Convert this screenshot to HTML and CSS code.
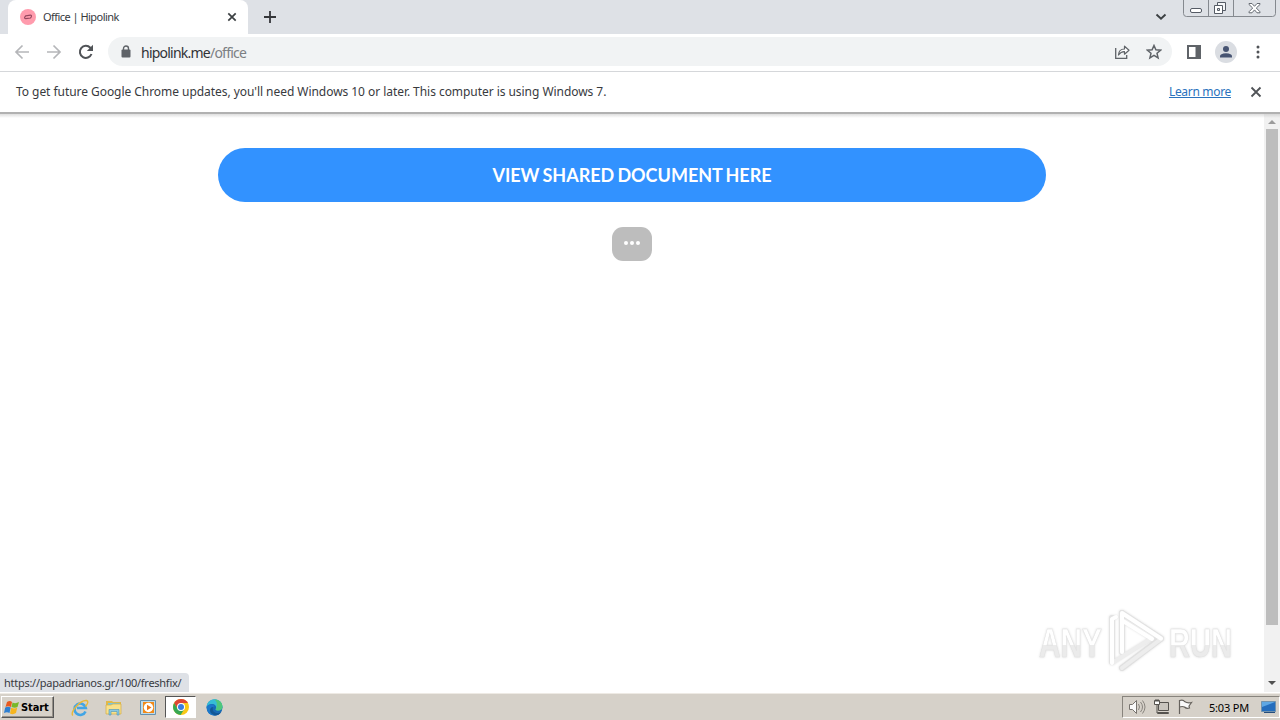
FILE: index.html
```html
<!DOCTYPE html>
<html lang="en">
<head>
<meta charset="utf-8">
<title>Office | Hipolink</title>
<link rel="stylesheet" href="styles.css">
</head>
<body>
<div class="desktop">
  <header class="tabstrip">
    <div class="tab">
      <svg class="favicon" width="16" height="16" viewBox="0 0 16 16"><circle cx="8" cy="8" r="8" fill="#ff9bad"/><path d="M5.700 6.800 10.500 6.200q1.300 0 .8 1.500l-.8 1.300-4.800.6Q4.300 9.600 4.700 8.200z" fill="none" stroke="#96485f" stroke-width="1.200"/></svg>
      <span class="tab-title">Office | Hipolink</span>
      <svg class="tab-close" width="10" height="10" viewBox="0 0 10 10"><path d="m1.300 1.300 7.400 7.400m0-7.400-7.400 7.400" stroke="#3c4043" stroke-width="1.700"/></svg>
    </div>
    <svg class="new-tab" width="12" height="12" viewBox="0 0 12 12"><path d="M6 0v12M0 6h12" stroke="#35363a" stroke-width="1.800"/></svg>
    <svg class="tab-search" width="12" height="8" viewBox="0 0 12 8"><path d="m1.500 1.500 4.500 4.300 4.500-4.300" fill="none" stroke="#3c4043" stroke-width="1.900"/></svg>
    <svg class="window-buttons" width="94" height="18" viewBox="0 0 94 18"><path d="M.5 0v13.500q0 3 3 3h86q3 0 3-3V0M25.500 0v16M50.500 0v16" fill="none" stroke="#85898f"/><rect x="7.500" y="8.500" width="11" height="4" rx="1.500" fill="#fff" stroke="#555b65"/><path d="M34.500 2.500h8v8h-8z" fill="#f5f6f8" stroke="#555b65"/><path d="M31.500 5.500h8v8h-8z" fill="#fff" stroke="#555b65"/><path d="M34.500 8.500h2v2h-2z" fill="#dee1e6" stroke="#555b65"/><path d="M66 3.500h3l2.500 2.800L74 3.500h3v1L73.300 8l3.700 3.800v1h-3l-2.500-2.900-2.500 2.900h-3v-1L69.700 8 66 4.500z" fill="#fff" stroke="#666b73"/></svg>
  </header>
  <nav class="toolbar">
    <svg class="back" width="16" height="16" viewBox="0 0 16 16"><path d="M15 8H2m6.500-6.500L2 8l6.500 6.500" fill="none" stroke="#b5b6b9" stroke-width="1.700"/></svg>
    <svg class="forward" width="16" height="16" viewBox="0 0 16 16"><path d="M1 8h13M7.500 1.500 14 8l-6.500 6.500" fill="none" stroke="#b5b6b9" stroke-width="1.700"/></svg>
    <svg class="reload" width="16" height="16" viewBox="0 0 16 16"><path d="M13.500 10A6 6 0 1 1 12.300 3.800L14 5.500" fill="none" stroke="#505357" stroke-width="2"/><path d="M15 .8V7H8.800z" fill="#505357"/></svg>
    <div class="omnibox">
      <svg class="lock" width="10" height="13" viewBox="0 0 10 13"><path d="M2.500 5V3.500a2.500 2.500 0 0 1 5 0V5" fill="none" stroke="#5f6368" stroke-width="1.400"/><rect x=".5" y="4.500" width="9" height="8" rx="1" fill="#5f6368"/></svg>
      <span class="url"><span class="host">hipolink.me</span>/office</span>
      <svg class="share" width="17" height="16" viewBox="0 0 17 16"><path d="M1.700 4v10.300h11V11" fill="none" stroke="#5f6368" stroke-width="1.300"/><path d="M4.500 11q.3-6 6-6V2.200l4.500 4-4.500 4V7.700Q7 7.500 4.500 11z" fill="#fff" stroke="#5f6368" stroke-width="1.200" stroke-linejoin="round"/></svg>
      <svg class="star" width="16" height="16" viewBox="0 0 16 16"><path d="m8 1.500 1.900 4.300 4.700.4L11 9.300l1.100 4.600L8 11.400l-4.100 2.500L5 9.300 1.400 6.200l4.700-.4z" fill="none" stroke="#5f6368" stroke-width="1.500"/></svg>
    </div>
    <svg class="side-panel" width="14" height="14" viewBox="0 0 14 14"><rect x="1" y="1" width="12" height="12" fill="#fff" stroke="#5f6368" stroke-width="2"/><path d="M8.500 1H13v12H8.500z" fill="#5f6368"/></svg>
    <svg class="avatar" width="22" height="22" viewBox="0 0 22 22"><circle cx="11" cy="11" r="11" fill="#dadde2"/><circle cx="11" cy="8" r="3" fill="#475472"/><path d="M5 16.500v-1.300q0-2.700 6-3 6 .3 6 3v1.300z" fill="#475472"/></svg>
    <svg class="menu" width="4" height="14" viewBox="0 0 4 14"><g fill="#505357"><circle cx="2" cy="2" r="1.500"/><circle cx="2" cy="7" r="1.500"/><circle cx="2" cy="12" r="1.500"/></g></svg>
  </nav>
  <div class="infobar">
    <span class="info-text">To get future Google Chrome updates, you'll need Windows 10 or later. This computer is using Windows 7.</span>
    <a class="learn">Learn more</a>
    <svg width="12" height="12" viewBox="0 0 12 12"><path d="m1.500 1.500 9 9m0-9-9 9" stroke="#505357" stroke-width="1.800"/></svg>
  </div>
  <main class="viewport">
    <div class="page">
      <a class="cta"><span>VIEW SHARED DOCUMENT HERE</span></a>
      <div class="more"><i></i><i></i><i></i></div>
    </div>
    <div class="scrollbar">
      <svg width="8" height="4" viewBox="0 0 8 4"><path d="m0 4 4-4 4 4z" fill="#9b9b9b"/></svg>
      <div class="thumb"></div>
      <svg class="down" width="8" height="4" viewBox="0 0 8 4"><path d="m0 0 4 4 4-4z" fill="#505050"/></svg>
    </div>
    <div class="status"><span>https://papadrianos.gr/100/freshfix/</span></div>
    <svg class="watermark" width="240" height="72" viewBox="0 0 240 72">
      <defs><linearGradient id="fade" x1="0" y1="0" x2="0" y2="1"><stop offset=".54" stop-color="#fff"/><stop offset=".54" stop-color="#ebebeb"/></linearGradient></defs>
      <g class="mark-letters" fill="url(#fade)"><text x="7" y="51" textLength="63" lengthAdjust="spacingAndGlyphs">ANY</text><text x="137" y="51" textLength="63" lengthAdjust="spacingAndGlyphs">RUN</text></g>
      <g fill="none" stroke-linejoin="round" stroke-linecap="round"><path d="m90 7 39 25.500L90 62" stroke="#e0e0e0" stroke-width="6"/><path d="M80 12v44M90 7v39m0-39 39 25.500" stroke="#e3e3e3" stroke-width="6"/><path d="M129 33 90 62M80 57l40-25-27-17" stroke="#ededed" stroke-width="4"/><path d="M80 57V13l4-2M90 46V7l39 25.500M91 15l29 18" stroke="#fff" stroke-width="4"/></g>
    </svg>
  </main>
  <footer class="taskbar">
    <div class="start">
      <svg width="16" height="15" viewBox="0 0 16 15"><path d="M3 2q3-2 5 0L7 7Q4 5.500 1.500 7z" fill="#e85a20"/><path d="M8.500 2.500q3 1.500 6.500-.5l-1.500 5Q11 8.500 7.500 7z" fill="#78b82a"/><path d="M1.200 7.500q3-1.500 5.500 0L5.500 13Q3 11.500 0 13z" fill="#2e7fd1"/><path d="M7.200 7.800q3 1.500 6 0L12 13q-3 2-6 .5z" fill="#f6b51e"/></svg>
      <span>Start</span>
    </div>
    <svg class="task-icon first-task" width="18" height="18" viewBox="0 0 18 18"><path d="M14.500 12.500A5.700 5.700 0 1 1 14.800 9H6" fill="none" stroke="#42a5e5" stroke-width="2.600"/><path d="M1.800 16.500C-1 13 9 1 15.500 1.500q3 1-1 6" fill="none" stroke="#e8b838" stroke-width="1.400"/></svg>
    <svg class="task-icon" width="18" height="18" viewBox="0 0 18 18"><path d="M1 4V2h6l1 1h8v11H1z" fill="#e2b948"/><path d="M3 4h12v6H3z" fill="#78c7df"/><path d="M1 6h5l2-1h8v10H1z" fill="#f8e18c" stroke="#d5ad43" stroke-width=".7"/><path d="M4 16v-5.500h10V16h-2v-3.500H6V16z" fill="#8ac9e2" stroke="#4c93b7" stroke-width=".6"/></svg>
    <svg class="task-icon" width="18" height="18" viewBox="0 0 18 18"><path d="M1.500 1.500h15v14h-15z" fill="#bedbea" stroke="#6590ae"/><path d="M4 3h11v11H4z" fill="#f28a19"/><circle cx="9.500" cy="8.500" r="4.700" fill="#fff"/><path d="m8 5.800 4.500 2.700L8 11.300z" fill="#ee7815"/></svg>
    <div class="active-task"><svg width="16" height="16" viewBox="0 0 16 16"><circle cx="8" cy="8" r="8" fill="#f9c816"/><path d="M1.100 4A8 8 0 0 1 15 4.100H8L4.700 10z" fill="#df4635"/><path d="M1.100 4a8 8 0 0 0 6.500 12l3.800-6-6.700 0z" fill="#37a853"/><circle cx="8" cy="8" r="4" fill="#fff"/><circle cx="8" cy="8" r="3" fill="#397de0"/></svg></div>
    <svg class="edge" width="17" height="17" viewBox="0 0 17 17"><circle cx="8.500" cy="8.500" r="8" fill="#1769b5"/><path d="M.6 7.500C2-2 15-2 16.400 7q.3 4.500-4.500 4.500-3.500 0-1.700-2.500Q10 4.500 5 5 2 5.500.6 7.500z" fill="#36bdd5"/><path d="M8.500.5q7 0 8 6.500.2 4.500-4.600 4.500-3.500 0-1.500-2.700Q12 3 8.500.5z" fill="#4fc77b"/><path d="M.6 7.500Q5 3.500 9 7q-3 1-2.200 4 1.700 3.500 7.700 2.500-2.500 3.500-7 3Q.5 15 .6 7.500z" fill="#1b78ca"/><path d="M7 8q-1.500 5 4 6 2 .3 4.300-1Q13 16.500 9 16.500 3 14.500 4.200 10 5 8.200 7 8z" fill="#125795"/></svg>
    <div class="tray">
      <svg class="speaker" width="18" height="16" viewBox="0 0 18 16"><path d="M1.500 5.500h3l4-4v13l-4-4h-3z" fill="#fafafa" stroke="#77736e"/><path d="M10.500 5q2 3 0 6m2-8q4 5 0 10m2-11.500q5 6.500 0 13" fill="none" stroke="#88847e"/></svg>
      <svg class="network" width="17" height="16" viewBox="0 0 17 16"><path d="M5.500 3.500h10v8h-10z" fill="#c9c5be" stroke="#55524e"/><path d="M4.500 13.500h11v1h-11z" fill="#fff" stroke="#55524e"/><path d="M1.500 1.500h5v4h-5zM4 6v8M3 0v3m2-3v3" fill="#fff" stroke="#55524e"/></svg>
      <svg class="flag" width="17" height="16" viewBox="0 0 17 16"><path d="M2.500 15V1.500q4-1 5 1 3 2 7 1L12 7l.5 2q-3 1-5-1-2-1-5 0" fill="#fafafa" stroke="#66625d" stroke-width="1.200"/></svg>
      <span>5:03 PM</span>
      <svg class="show-desktop" width="16" height="14" viewBox="0 0 16 14"><path d="M.5 1.500h14v10H.5z" fill="#246dbd" stroke="#7293ad"/><path d="M1 2h13L1 7z" fill="#5ea7e4"/><path d="M3 12h11v1H3z" fill="#254d7c"/></svg>
    </div>
  </footer>
</div>
</body>
</html>
```
FILE: styles.css
```css
* { box-sizing: border-box; }
body { margin: 0; font-family: "Noto Sans", sans-serif; color: #383a3e; overflow: hidden; }
svg { display: block; flex: none; }
span, a { white-space: nowrap; }
.desktop { width: 1280px; height: 720px; display: flex; flex-direction: column; background: #fff; }
.tabstrip { height: 34px; flex: none; display: flex; background: #dee1e6; padding-left: 8px; }
.tab { width: 240px; height: 34px; display: flex; align-items: center; padding-left: 12px; border-radius: 8px 8px 0 0; background: #fff; }
.tab-title { margin: -2px 0 0 7px; width: 184px; font-size: 11px; letter-spacing: -.54px; }
.new-tab { margin: 11px 0 0 16px; }
.tab-search { margin: 13px 16px 0 auto; }
.window-buttons { margin-right: 3px; }
.toolbar { height: 38px; flex: none; display: flex; align-items: center; background: #fff; padding: 0 20px 2px 14px; border-bottom: 1px solid #d5d7da; }
.forward, .reload { margin-left: 16px; }
.omnibox { margin-left: 14px; width: 1064px; height: 29px; border-radius: 15px; background: #f1f3f4; display: flex; align-items: center; padding: 0 10px 0 13px; }
.url { margin: 1px 0 0 10px; font-size: 14px; letter-spacing: -.77px; color: #7c7f83; }
.host { color: #303236; }
.share { margin-left: auto; }
.star { margin-left: 15px; }
.side-panel { margin-left: 15px; }
.avatar { margin-left: 14px; }
.menu { margin-left: auto; }
.infobar { height: 40px; flex: none; display: flex; align-items: center; padding: 0 18px 0 16px; }
.info-text { margin-top: -2px; font-size: 12px; letter-spacing: -.05px; }
.learn { margin: -2px 19px 0 auto; font-size: 12px; letter-spacing: -.32px; color: #2a72bd; text-decoration: underline; }
.viewport { height: 580px; flex: none; position: relative; display: flex; border-top: 2px solid #b1b1b1; background: linear-gradient(#dedede, #fff 4px); }
.page { width: 1264px; display: flex; flex-direction: column; align-items: center; padding-top: 34px; }
.cta { width: 828px; height: 54px; border-radius: 27px; background: #3292ff; display: flex; align-items: center; justify-content: center; color: #fff; font: 700 18px Lato, sans-serif; word-spacing: -1.3px; }
.more { width: 40px; height: 34px; margin-top: 25px; border-radius: 11px; background: #bdbdbd; display: flex; align-items: center; justify-content: center; gap: 2px; padding-bottom: 2px; }
.more i { width: 4px; height: 4px; border-radius: 50%; background: #fff; }
.scrollbar { width: 16px; background: linear-gradient(#d6d6d6, #f1f1f1 4px); display: flex; flex-direction: column; align-items: center; padding-top: 6px; }
.thumb { width: 12px; height: 496px; margin-top: 5px; background: #bdbdbd; }
.down { margin-top: 56px; }
.status { position: absolute; bottom: 0; left: 0; height: 19px; width: 189px; background: #dee1e6; border-radius: 0 4px 0 0; padding-left: 4px; font-size: 11px; line-height: 19px; letter-spacing: -.27px; }
.watermark { position: absolute; left: 1032px; top: 492px; filter: drop-shadow(0 0 1px #ddd); }
.mark-letters { font: 700 41px "Liberation Sans", sans-serif; stroke: #e2e2e2; stroke-width: .6px; }
.taskbar { height: 28px; flex: none; background: #d6d1c9; border-top: 1px solid #fff; box-shadow: inset 0 1px #eeeae4; display: flex; align-items: center; }
.start { width: 53px; height: 22px; margin: 1px 0 0 1px; border: 1px solid; border-color: #fff #555 #555 #fff; box-shadow: inset -1px -1px #969189; display: flex; align-items: center; padding-left: 2px; font: 700 11px "DejaVu Sans Condensed", sans-serif; letter-spacing: -.1px; color: #000; }
.start svg { margin-right: 1px; }
.task-icon { margin: 2px 0 0 16px; }
.first-task { margin-left: 17px; }
.active-task { width: 31px; height: 22px; margin-left: 8px; background: #fff; border: 1px solid; border-color: #555 #fff #fff #555; display: flex; align-items: center; justify-content: center; }
.edge { margin: 1px 0 0 10px; }
.tray { width: 158px; height: 22px; margin: 1px 0 0 auto; border: 1px solid; border-color: #88847d #fff #fff #88847d; display: flex; align-items: center; padding-left: 5px; color: #000; font-size: 11px; letter-spacing: -.2px; }
.network, .flag { margin-left: 7px; }
.tray span { margin-left: 15px; }
.show-desktop { margin: 0 2px 0 auto; }
```
